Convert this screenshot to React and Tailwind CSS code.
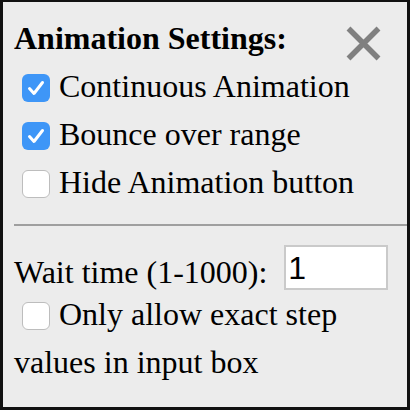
import React from 'react';

const Box = ({ checked }) => (
    <span
        className={`inline-block w-[28px] h-[28px] rounded-[6px] align-[-5px] ml-[8px] mr-[9px] ${checked ? 'bg-[#3e96f7]' : 'bg-white border-[1.5px] border-[#bdbdbd]'}`}
    >
        {checked && (
            <svg width="28" height="28" viewBox="0 0 28 28">
                <path d="M7.5 14.5 L12 19.5 L20.5 8.5" fill="none" stroke="#fff" strokeWidth="3" strokeLinecap="round" strokeLinejoin="round" />
            </svg>
        )}
    </span>
);

const App = () => {
    return (
        <div className="relative w-[410px] h-[410px] bg-[#ececec] border-[#111] border-x-[3px] border-b-[3px] border-t-2 pl-[11px] pt-[12px] font-['Liberation_Serif',serif] text-[32px] leading-[48px] text-black">
            <button className="absolute top-[24px] right-[26px] w-[35px] h-[35px]">
                <svg width="35" height="35" viewBox="0 0 35 35">
                    <path d="M2.5 2.5 L32.5 32.5 M32.5 2.5 L2.5 32.5" stroke="#808080" strokeWidth="5.5" />
                </svg>
            </button>

            <div className="font-bold">Animation Settings:</div>
            <div><Box checked />Continuous Animation</div>
            <div><Box checked />Bounce over range</div>
            <div><Box />Hide Animation button</div>

            <div className="mt-[18px] h-[2px] bg-[#9f9f9f]" />

            <div className="flex items-start h-[45px] mt-[19px]">
                <span className="mt-[3px] whitespace-nowrap">Wait time (1-1000):</span>
                <input
                    type="text"
                    defaultValue="1"
                    className="ml-[17px] w-[104px] shrink-0 h-[45px] bg-white border-2 border-[#cacaca] pl-[2px] font-['Liberation_Sans',sans-serif] text-[32px] outline-none"
                />
            </div>

            <div><Box />Only allow exact step values in input box</div>
        </div>
    );
};

export default App;
